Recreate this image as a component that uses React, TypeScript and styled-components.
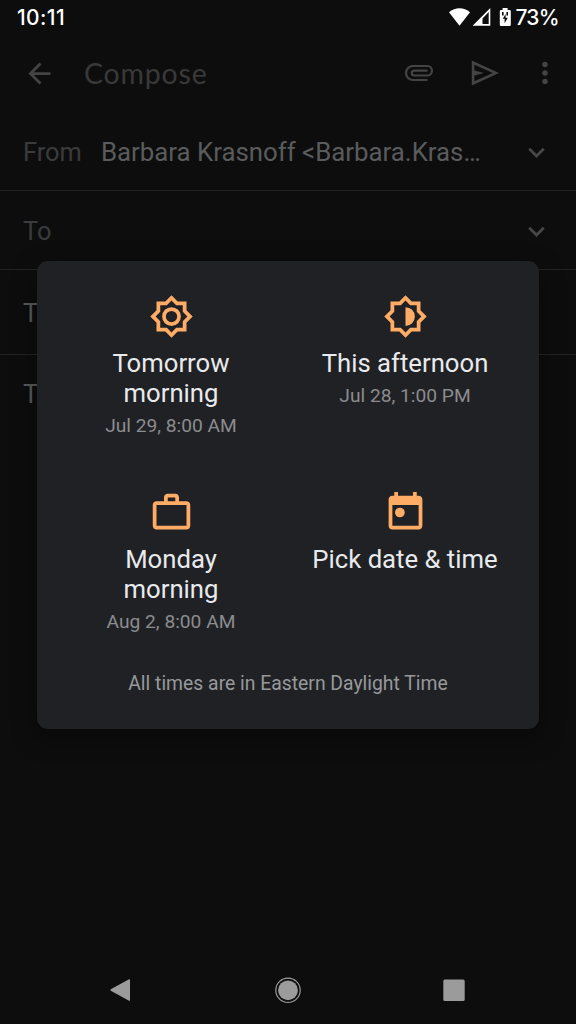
import React from 'react';
import styled, { createGlobalStyle } from 'styled-components';

const GlobalStyle = createGlobalStyle`
  * { box-sizing: border-box; }
  body { margin: 0; background: #0d0d0d; }
  svg { display: block; flex: none; }
`;

const Screen = styled.main`
  position: relative;
  display: flex;
  flex-direction: column;
  width: 576px;
  height: 1024px;
  overflow: hidden;
  background: #0d0d0d;
  font-family: Roboto, sans-serif;
`;

const StatusBar = styled.header`
  display: flex;
  align-items: center;
  justify-content: space-between;
  height: 36px;
  padding: 0 17px 0 17px;
  color: #fff;
  font: 500 21px/36px Inter, sans-serif;
`;

const Clock = styled.span`
  letter-spacing: 0.4px;
`;

const StatusIcons = styled.div`
  display: flex;
  align-items: center;
`;

const Battery = styled.span`
  margin-left: 3px;
  letter-spacing: -0.7px;
`;

const AppBar = styled.div`
  display: flex;
  align-items: center;
  height: 74px;
  padding: 0 14px 0 23px;
  color: #444445;
`;

const AppTitle = styled.h1`
  flex: 1;
  margin: 0 0 0 28px;
  color: #39393a;
  font: 400 28.5px/36px Lato, sans-serif;
  letter-spacing: 0.8px;
`;

const Actions = styled.div`
  display: flex;
  align-items: center;
`;

const Field = styled.div<{ $height: number; $drop?: number }>`
  display: flex;
  align-items: center;
  height: ${(p) => p.$height}px;
  padding: ${(p) => p.$drop ?? 0}px 23px 0;
  border-bottom: 1px solid #222324;
  color: #5a5b5c;
  font-size: 25.8px;
  line-height: 32px;
`;

const Label = styled.span`
  width: 78px;
  color: #3a3b3d;
  font-size: 25.4px;
`;

const Value = styled.span`
  flex: 1;
  white-space: nowrap;
`;

const Expand = styled.span`
  color: #464749;
`;

const Body = styled.div`
  flex: 1;
  padding: 23px 23px;
  color: #5a5b5c;
  font-size: 26px;
  line-height: 32px;
`;

const NavBar = styled.nav`
  display: flex;
  align-items: center;
  justify-content: space-between;
  height: 68px;
  padding: 0 110px 0 108px;
  color: #9b9b9b;
`;

const Dialog = styled.section`
  position: absolute;
  top: 261px;
  left: 37px;
  width: 502px;
  height: 468px;
  padding: 33px 17px 0;
  border-radius: 11px;
  background: #202124;
  box-shadow: 0 8px 26px rgba(0, 0, 0, 0.4);
`;

const Options = styled.div`
  display: grid;
  grid-template-columns: 234px 234px;
  grid-auto-rows: 196px;
`;

const Option = styled.div`
  display: flex;
  flex-direction: column;
  align-items: center;
  padding: 0 23px;
  text-align: center;
  color: #ffac66;
`;

const OptionTitle = styled.div`
  margin-top: 9px;
  color: #e8eaed;
  font-size: 25.7px;
  line-height: 30px;
`;

const OptionTime = styled.div`
  margin-top: 6px;
  color: #8b8c8f;
  font-size: 19.2px;
  line-height: 24px;
`;

const Note = styled.p`
  margin: -14px 0 0;
  color: #96999c;
  text-align: center;
  font-size: 19.35px;
  line-height: 24px;
`;

const STAR =
  'M20 8.69V4h-4.69L12 .69 8.69 4H4v4.69L.69 12 4 15.31V20h4.69L12 23.31 15.31 20H20v-4.69L23.31 12 20 8.69zm-2 5.79V18h-3.52L12 20.48 9.52 18H6v-3.52L3.52 12 6 9.52V6h3.52L12 3.52 14.48 6H18v3.52L20.48 12 18 14.48z';

const GLYPHS = {
  morning: `${STAR}M12 7a5 5 0 1 0 0 10 5 5 0 0 0 0-10zm0 8a3 3 0 1 1 0-6 3 3 0 0 1 0 6z`,
  afternoon: `${STAR}M12 7v10a5 5 0 0 0 0-10z`,
  work: 'M14 6V4h-4v2h4zM4 8v11h16V8H4zm16-2c1.11 0 2 .89 2 2v11c0 1.11-.89 2-2 2H4c-1.11 0-2-.89-2-2V8c0-1.11.89-2 2-2h4V4c0-1.11.89-2 2-2h4c1.11 0 2 .89 2 2v2h4z',
  calendar:
    'M19 3h-1V1h-2v2H8V1H6v2H5c-1.1 0-2 .9-2 2v14c0 1.1.9 2 2 2h14c1.1 0 2-.9 2-2V5c0-1.1-.9-2-2-2zm0 16H5V8h14v11zM9 9.4a2.6 2.6 0 1 0 0 5.2 2.6 2.6 0 0 0 0-5.2z',
  back: 'M20 11H7.83l5.59-5.59L12 4l-8 8 8 8 1.41-1.41L7.83 13H20v-2z',
  more: 'M12 8c1.1 0 2-.9 2-2s-.9-2-2-2-2 .9-2 2 .9 2 2 2zm0 2c-1.1 0-2 .9-2 2s.9 2 2 2 2-.9 2-2-.9-2-2-2zm0 6c-1.1 0-2 .9-2 2s.9 2 2 2 2-.9 2-2-.9-2-2-2z',
  chevron: 'M7.41 8.59 12 13.17l4.59-4.58L18 10l-6 6-6-6 1.41-1.41z',
};

type GlyphProps = { name: keyof typeof GLYPHS; size: number };

const Glyph = ({ name, size }: GlyphProps) => (
  <svg width={size} height={size} viewBox="0 0 24 24" fill="currentColor" fillRule="evenodd">
    <path d={GLYPHS[name]} />
  </svg>
);

const SignalIcons = () => (
  <svg width="64" height="22" viewBox="0 0 64 22" fill="#fff">
    <path d="M1 5.3C7-.2 16-.2 22 5.3L11.500 18.700z" />
    <path fillRule="evenodd" d="M42.300 1V18.700H24.600zM40.700 5L34.500 11.400V17.100H40.700z" />
    <path
      fillRule="evenodd"
      d="M54.600 1h5v2h2q1.200 0 1.200 1.200V17.800q0 1.200-1.200 1.200H53q-1.200 0-1.200-1.200V4.200Q51.800 3 53 3H54.600zM54 5V8.500H55.600V5zM58.400 5V8.500H60V5zM57.600 7L54.800 11.800H56.600V16.200L59.800 10.800H57.600z"
    />
  </svg>
);

const Paperclip = () => (
  <svg width="30" height="18" viewBox="0 0 30 18" fill="none" stroke="currentColor" strokeWidth="2.200">
    <path d="M23.500 16H9A7 7 0 0 1 9 2H23.200A4.700 4.700 0 0 1 23.200 11.500H10.200A2.300 2.300 0 0 1 10.200 6.700H23.500" />
  </svg>
);

const Send = () => (
  <svg width="30" height="28" viewBox="0 0 30 28" fill="currentColor" fillRule="evenodd">
    <path d="M1.800 1.600L29 14 1.800 26.400zM4.400 5.700V11.400L14 14 4.400 16.600V22.300L22.800 14z" />
  </svg>
);

const options: { icon: GlyphProps['name']; title: string; time?: string }[] = [
  { icon: 'morning', title: 'Tomorrow morning', time: 'Jul 29, 8:00 AM' },
  { icon: 'afternoon', title: 'This afternoon', time: 'Jul 28, 1:00 PM' },
  { icon: 'work', title: 'Monday morning', time: 'Aug 2, 8:00 AM' },
  { icon: 'calendar', title: 'Pick date & time' },
];

const ActionSlot = styled.span<{ $gap: number }>`
  margin-left: ${(p) => p.$gap}px;
`;

export default function App() {
  return (
    <Screen>
      <GlobalStyle />
      <StatusBar>
        <Clock>10:11</Clock>
        <StatusIcons>
          <SignalIcons />
          <Battery>73%</Battery>
        </StatusIcons>
      </StatusBar>
      <AppBar>
        <Glyph name="back" size={33} />
        <AppTitle>Compose</AppTitle>
        <Actions>
          <Paperclip />
          <ActionSlot $gap={36}>
            <Send />
          </ActionSlot>
          <ActionSlot $gap={28}>
            <Glyph name="more" size={34} />
          </ActionSlot>
        </Actions>
      </AppBar>
      <Field $height={81} $drop={4}>
        <Label>From</Label>
        <Value>Barbara Krasnoff &lt;Barbara.Kras…</Value>
        <Expand>
          <Glyph name="chevron" size={33} />
        </Expand>
      </Field>
      <Field $height={79} $drop={2}>
        <Label>To</Label>
        <Value />
        <Expand>
          <Glyph name="chevron" size={33} />
        </Expand>
      </Field>
      <Field $height={85} $drop={2}>T</Field>
      <Body>T</Body>
      <NavBar>
        <svg width="24" height="26" viewBox="0 0 24 26" fill="currentColor">
          <path d="M21 2.300Q22 1.800 22 3V23Q22 24.200 21 23.700L2.800 13.700Q1.800 13 2.800 12.300z" />
        </svg>
        <svg width="30" height="28" viewBox="0 0 30 28" fill="currentColor">
          <circle cx="16" cy="14.300" r="9.900" />
          <circle cx="16" cy="14.300" r="12.200" fill="none" stroke="currentColor" strokeWidth="1.200" />
        </svg>
        <svg width="24" height="24" viewBox="0 0 24 24" fill="currentColor">
          <rect x="1.300" y="1.500" width="21.400" height="21.400" rx="1.500" />
        </svg>
      </NavBar>
      <Dialog>
        <Options>
          {options.map((o) => (
            <Option key={o.title}>
              <Glyph name={o.icon} size={45} />
              <OptionTitle>{o.title}</OptionTitle>
              {o.time && <OptionTime>{o.time}</OptionTime>}
            </Option>
          ))}
        </Options>
        <Note>All times are in Eastern Daylight Time</Note>
      </Dialog>
    </Screen>
  );
}
